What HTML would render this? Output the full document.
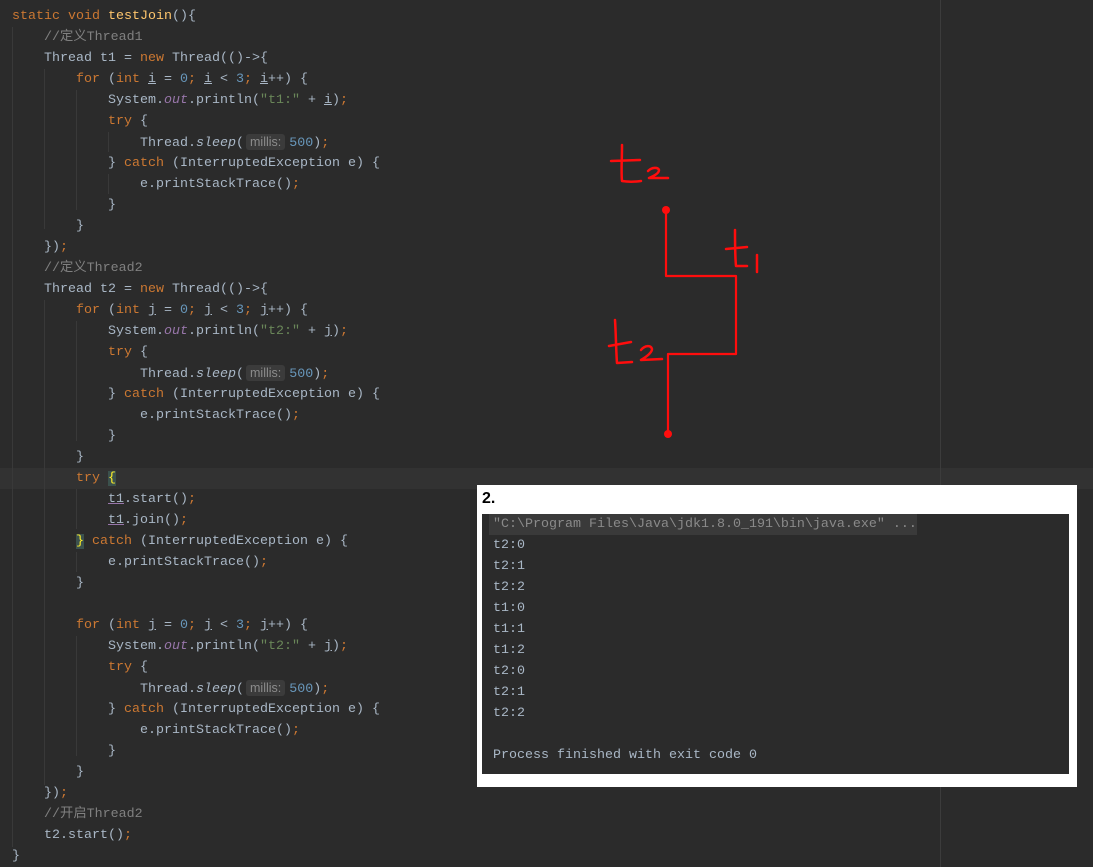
<!DOCTYPE html>
<html><head><meta charset="utf-8"><style>
body{margin:0;width:1093px;height:867px;background:#2b2b2b;overflow:hidden;position:relative;font-family:"Liberation Mono","Noto Sans CJK SC",monospace;font-size:13.33px;color:#a9b7c6}
.l{position:absolute;left:0;height:21px;line-height:21px;white-space:pre}
.k{color:#cc7832}.c{color:#808080}.s{color:#6a8759}.n{color:#6897bb}.f{color:#9876aa;font-style:italic}.m{color:#ffc66d}.it{font-style:italic}
.u{text-decoration:underline}
.h{background:#3b3b3b;color:#8c8c8c;font-family:"Liberation Sans",sans-serif;font-size:12.5px;border-radius:3px;padding:1px 4px;margin:0 4px 0 2px}
.g{position:absolute;width:1px;background:#393939}
</style></head><body>
<div style="position:absolute;left:0;top:468px;width:1093px;height:21px;background:#323232"></div>
<div style="position:absolute;left:940px;top:0;width:1px;height:867px;background:#3c3c3c"></div>
<div class="g" style="left:12px;top:27px;height:820px"></div>
<div class="g" style="left:44px;top:69px;height:160px"></div>
<div class="g" style="left:44px;top:300px;height:485px"></div>
<div class="g" style="left:76px;top:90px;height:120px"></div>
<div class="g" style="left:108px;top:132px;height:20px"></div>
<div class="g" style="left:108px;top:174px;height:20px"></div>
<div class="g" style="left:76px;top:321px;height:120px"></div>
<div class="g" style="left:76px;top:489px;height:40px"></div>
<div class="g" style="left:76px;top:552px;height:20px"></div>
<div class="g" style="left:76px;top:636px;height:120px"></div>
<div id="code"></div>
<script>
var L=[
[0,'<span class="k">static void </span><span class="m">testJoin</span>(){'],
[1,'<span class="c">//定义Thread1</span>'],
[1,'Thread t1 = <span class="k">new </span>Thread(()->{'],
[2,'<span class="k">for </span>(<span class="k">int </span><span class="u">i</span> = <span class="n">0</span><span class="k">; </span><span class="u">i</span> &lt; <span class="n">3</span><span class="k">; </span><span class="u">i</span>++) {'],
[3,'System.<span class="f">out</span>.println(<span class="s">"t1:"</span> + <span class="u">i</span>)<span class="k">;</span>'],
[3,'<span class="k">try </span>{'],
[4,'Thread.<span class="it">sleep</span>(<span class="h">millis:</span><span class="n">500</span>)<span class="k">;</span>'],
[3,'} <span class="k">catch </span>(InterruptedException e) {'],
[4,'e.printStackTrace()<span class="k">;</span>'],
[3,'}'],[2,'}'],[1,'})<span class="k">;</span>'],
[1,'<span class="c">//定义Thread2</span>'],
[1,'Thread t2 = <span class="k">new </span>Thread(()->{'],
[2,'<span class="k">for </span>(<span class="k">int </span><span class="u">j</span> = <span class="n">0</span><span class="k">; </span><span class="u">j</span> &lt; <span class="n">3</span><span class="k">; </span><span class="u">j</span>++) {'],
[3,'System.<span class="f">out</span>.println(<span class="s">"t2:"</span> + <span class="u">j</span>)<span class="k">;</span>'],
[3,'<span class="k">try </span>{'],
[4,'Thread.<span class="it">sleep</span>(<span class="h">millis:</span><span class="n">500</span>)<span class="k">;</span>'],
[3,'} <span class="k">catch </span>(InterruptedException e) {'],
[4,'e.printStackTrace()<span class="k">;</span>'],
[3,'}'],[2,'}'],
[2,'<span class="k">try </span><span style="background:#3b514d;color:#ffef28">{</span>'],
[3,'<span class="u" style="text-decoration-color:#9876aa">t1</span>.start()<span class="k">;</span>'],
[3,'<span class="u" style="text-decoration-color:#9876aa">t1</span>.join()<span class="k">;</span>'],
[2,'<span style="background:#3b514d;color:#ffef28">}</span> <span class="k">catch </span>(InterruptedException e) {'],
[3,'e.printStackTrace()<span class="k">;</span>'],
[2,'}'],[0,''],
[2,'<span class="k">for </span>(<span class="k">int </span><span class="u">j</span> = <span class="n">0</span><span class="k">; </span><span class="u">j</span> &lt; <span class="n">3</span><span class="k">; </span><span class="u">j</span>++) {'],
[3,'System.<span class="f">out</span>.println(<span class="s">"t2:"</span> + <span class="u">j</span>)<span class="k">;</span>'],
[3,'<span class="k">try </span>{'],
[4,'Thread.<span class="it">sleep</span>(<span class="h">millis:</span><span class="n">500</span>)<span class="k">;</span>'],
[3,'} <span class="k">catch </span>(InterruptedException e) {'],
[4,'e.printStackTrace()<span class="k">;</span>'],
[3,'}'],[2,'}'],[1,'})<span class="k">;</span>'],
[1,'<span class="c">//开启Thread2</span>'],
[1,'t2.start()<span class="k">;</span>'],
[0,'}']];
var h='';
for(var i=0;i<L.length;i++){h+='<div class="l" style="top:'+(6+21*i)+'px;left:'+(12+32*L[i][0])+'px">'+L[i][1]+'</div>';}
document.getElementById('code').innerHTML=h;
</script>
<svg style="position:absolute;left:0;top:0" width="1093" height="867" fill="none" stroke="#ff0d0d" stroke-width="2.5" stroke-linecap="round" stroke-linejoin="round">
<path d="M666 209V276H736V354H668V434" stroke-width="2.2"/>
<circle cx="666" cy="210" r="4" fill="#ff0d0d" stroke="none"/>
<circle cx="668" cy="434" r="4" fill="#ff0d0d" stroke="none"/>
<path d="M622 145C622 160 621 172 622 181C628 182 634 182 641 181M611 161L640 160"/>
<path d="M648 171C652 167 658 167 659 170C659 173 654 176 649 178L668 178"/>
<path d="M735 230C735 244 735 256 736 266L747 266M726 249L747 247M757 255L757 272"/>
<path d="M615 320C616 335 616 350 617 363L632 362M609 346L631 342"/>
<path d="M641 350C645 345 651 345 652 349C652 353 646 357 641 360L662 359"/>
</svg>
<div style="position:absolute;left:477px;top:485px;width:600px;height:302px;background:#fff"></div>
<div style="position:absolute;left:482px;top:486px;font:bold 16px 'Liberation Sans',sans-serif;color:#000;line-height:26px">2.</div>
<div style="position:absolute;left:482px;top:514px;width:587px;height:260px;background:#2b2b2b"></div>
<div style="position:absolute;left:489px;top:514px;width:428px;height:21px;background:#3a3a3a"></div>
<div style="position:absolute;left:493px;top:514px;line-height:21px;white-space:pre;color:#a9b7c6"><div style="color:#8a8a8a">"C:\Program Files\Java\jdk1.8.0_191\bin\java.exe" ...</div><div>t2:0</div><div>t2:1</div><div>t2:2</div><div>t1:0</div><div>t1:1</div><div>t1:2</div><div>t2:0</div><div>t2:1</div><div>t2:2</div><div> </div><div>Process finished with exit code 0</div></div>
</body></html>
